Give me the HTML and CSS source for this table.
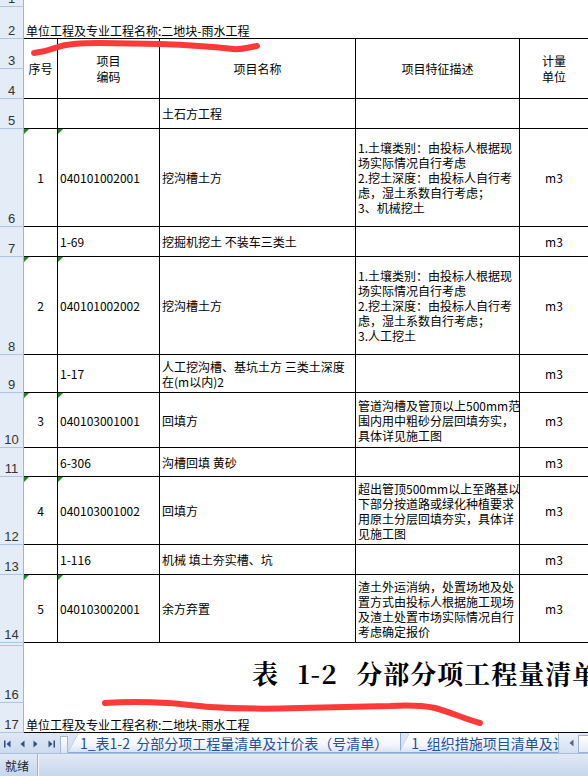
FILE: index.html
```html
<!DOCTYPE html>
<html lang="zh-CN">
<head>
<meta charset="utf-8">
<title>分部分项工程量清单</title>
<link rel="stylesheet" href="styles.css">
</head>
<body>
<div class="app">
  <div class="sheet">
    <div class="rh">1</div><div class="span"></div>
    <div class="rh">2</div><div class="span caption">单位工程及专业工程名称:二地块-雨水工程</div>

    <div class="rh">3</div>
    <div class="c hd">序号</div>
    <div class="c hd">项目<br>编码</div>
    <div class="c hd">项目名称</div>
    <div class="c hd">项目特征描述</div>
    <div class="c hd u">计量<br>单位</div>
    <div class="rh">4</div>

    <div class="rh">5</div>
    <div class="c"></div><div class="c"></div><div class="c">土石方工程</div><div class="c"></div><div class="c u"></div>

    <div class="rh">6</div>
    <div class="c num tri">1</div><div class="c tri">040101002001</div><div class="c">挖沟槽土方</div>
    <div class="c">1.土壤类别：由投标人根据现<br>场实际情况自行考虑<br>2.挖土深度：由投标人自行考<br>虑，湿土系数自行考虑；<br>3、机械挖土</div>
    <div class="c u">m3</div>

    <div class="rh">7</div>
    <div class="c"></div><div class="c">1-69</div><div class="c">挖掘机挖土 不装车三类土</div><div class="c"></div><div class="c u">m3</div>

    <div class="rh">8</div>
    <div class="c num tri">2</div><div class="c tri">040101002002</div><div class="c">挖沟槽土方</div>
    <div class="c">1.土壤类别：由投标人根据现<br>场实际情况自行考虑<br>2.挖土深度：由投标人自行考<br>虑，湿土系数自行考虑；<br>3.人工挖土</div>
    <div class="c u">m3</div>

    <div class="rh">9</div>
    <div class="c"></div><div class="c">1-17</div><div class="c">人工挖沟槽、基坑土方 三类土深度<br>在(m以内)2</div><div class="c"></div><div class="c u">m3</div>

    <div class="rh">10</div>
    <div class="c num tri">3</div><div class="c tri">040103001001</div><div class="c">回填方</div>
    <div class="c">管道沟槽及管顶以上500mm范<br>围内用中粗砂分层回填夯实，<br>具体详见施工图</div>
    <div class="c u">m3</div>

    <div class="rh">11</div>
    <div class="c"></div><div class="c">6-306</div><div class="c">沟槽回填 黄砂</div><div class="c"></div><div class="c u">m3</div>

    <div class="rh">12</div>
    <div class="c num tri">4</div><div class="c tri">040103001002</div><div class="c">回填方</div>
    <div class="c">超出管顶500mm以上至路基以<br>下部分按道路或绿化种植要求<br>用原土分层回填夯实，具体详<br>见施工图</div>
    <div class="c u">m3</div>

    <div class="rh">13</div>
    <div class="c"></div><div class="c">1-116</div><div class="c">机械 填土夯实槽、坑</div><div class="c"></div><div class="c u">m3</div>

    <div class="rh">14</div>
    <div class="c num tri">5</div><div class="c tri">040103002001</div><div class="c">余方弃置</div>
    <div class="c">渣土外运消纳，处置场地及处<br>置方式由投标人根据施工现场<br>及渣土处置市场实际情况自行<br>考虑确定报价</div>
    <div class="c u">m3</div>

    <div class="rh"></div><div class="span"></div>
    <div class="rh">16</div><div class="span title">表 1-2 分部分项工程量清单及计价表</div>
    <div class="rh">17</div><div class="span caption">单位工程及专业工程名称:二地块-雨水工程</div>
  </div>

  <div class="tabbar">
    <div class="nav">
      <svg class="ic i1" width="7" height="8" viewBox="0 0 7 8"><rect x="0" y="0.5" width="1.5" height="7" fill="#2b4f86"/><polygon points="6.5,0.5 2.5,4 6.5,7.5" fill="#2b4f86"/></svg>
      <svg class="ic i2" width="5" height="8" viewBox="0 0 5 8"><polygon points="4.5,0.5 0.5,4 4.5,7.5" fill="#2b4f86"/></svg>
      <svg class="ic i3" width="5" height="8" viewBox="0 0 5 8"><polygon points="0.5,0.5 4.5,4 0.5,7.5" fill="#2b4f86"/></svg>
      <svg class="ic i4" width="7" height="8" viewBox="0 0 7 8"><polygon points="0.5,0.5 4.5,4 0.5,7.5" fill="#2b4f86"/><rect x="5.5" y="0.5" width="1.5" height="7" fill="#2b4f86"/></svg>
    </div>
    <div class="split"></div>
    <div class="tabs">
      <div class="tab active">1_表1-2&nbsp;&nbsp;分部分项工程量清单及计价表（号清单）</div>
      <div class="tab">1_组织措施项目清单及计价表</div>
    </div>
    <div class="scroll">
      <div class="sbtn"><svg width="5" height="8" viewBox="0 0 5 8"><polygon points="4.5,0.5 0.5,4 4.5,7.5" fill="#55657e"/></svg></div>
      <div class="sbox"></div>
    </div>
  </div>

  <div class="status">
    <div class="ready">就绪</div>
    <div class="rest"></div>
  </div>

  <svg class="marks" width="588" height="776" viewBox="0 0 588 776">
    <path d="M34,53 C42,52 50,50 58,47 C66,44 80,43 100,43 L160,44 C190,45 215,47 233,49 C242,50 250,47 257,46" />
    <path d="M105,703 C120,702 150,702 167,703 C185,704 195,706 210,707 C240,709 270,709 300,708 L390,706 C410,705 425,706 435,708 C450,712 465,719 480,723" />
  </svg>
</div>
</body>
</html>
```

FILE: styles.css
```css
* { box-sizing: border-box; }
html, body { margin: 0; padding: 0; }
body {
  width: 588px;
  height: 776px;
  overflow: hidden;
  background: #fff;
  font-family: "Noto Sans CJK SC", "Liberation Sans", sans-serif;
  font-size: 12px;
  color: #000;
}
.app {
  position: relative;
  display: flex;
  flex-direction: column;
  height: 776px;
}
.sheet {
  display: grid;
  grid-template-columns: 24px 34px 102px 196px 164px 1fr;
  grid-template-rows: 7px 32px 30px 30px 30px 98px 30px 98px 38px 55px 29px 68px 30px 68px 3px 57px 30px;
}
.rh {
  display: flex;
  align-items: flex-end;
  justify-content: center;
  background: #e4ecf7;
  border-right: 1px solid #9eb6d5;
  border-bottom: 1px solid #aec4e0;
  font-family: "Liberation Sans", sans-serif;
  font-size: 13px;
  line-height: 13px;
  color: #333;
  overflow: hidden;
  padding-bottom: 1px;
}
.span { grid-column: 2 / -1; }
.caption {
  display: flex;
  align-items: flex-end;
  padding-left: 2px;
  line-height: 15px;
  white-space: nowrap;
  border-bottom: 1px solid #000;
}
.c {
  position: relative;
  display: flex;
  align-items: center;
  padding: 0 2px;
  line-height: 15px;
  white-space: nowrap;
  border-right: 1px solid #000;
  border-bottom: 1px solid #000;
}
.hd {
  grid-row: span 2;
  justify-content: center;
  text-align: center;
  line-height: 16px;
}
.num, .u { justify-content: center; }
.u { border-right: 0; }
.tri::before {
  content: "";
  position: absolute;
  top: 0;
  left: 0;
  border-top: 5px solid #178a17;
  border-right: 5px solid transparent;
}
.title {
  display: flex;
  align-items: center;
  padding-left: 228px;
  padding-bottom: 4px;
  font-family: "Noto Serif CJK SC", "Liberation Serif", "Noto Sans CJK SC", serif;
  font-size: 26px;
  font-weight: 700;
  letter-spacing: 1px;
  word-spacing: 11px;
  white-space: nowrap;
  overflow: hidden;
}

/* sheet tabs */
.tabbar {
  display: flex;
  height: 20px;
  background: linear-gradient(#dfe8f5, #cddbef);
  font-size: 14px;
}
.nav {
  display: flex;
  align-items: center;
  width: 60px;
  flex: none;
  padding-left: 4px;
  padding-top: 2px;
}
.ic { display: block; }
.i2 { margin-left: 9px; }
.i3 { margin-left: 8px; }
.i4 { margin-left: 10px; }
.split {
  width: 8px;
  flex: none;
  margin-top: 3px;
  background: linear-gradient(#ffffff, #dbe5f2);
  border: 1px solid #a3b8d4;
  border-bottom: 0;
}
.tabs {
  flex: 1;
  min-width: 0;
  display: flex;
  overflow: hidden;
}
.tab {
  position: relative;
  flex: none;
  padding: 2px 12px 0 12px;
  line-height: 17px;
  color: #1f4f9e;
  white-space: nowrap;
  background: linear-gradient(#ffffff, #f1f5fb 65%, #d7e3f3);
  border-right: 1px solid #8ea9cf;
  border-bottom: 1px solid #8ea9cf;
  clip-path: polygon(0 100%, 10px 0, 100% 0, 100% 100%);
}
.tab::before {
  content: "";
  position: absolute;
  left: 0;
  top: 0;
  width: 10px;
  height: 100%;
  background: linear-gradient(to top left, transparent calc(50% - 1px), #8ea9cf 50%, transparent calc(50% + 1px));
}
.tab + .tab { margin-left: -2px; }
.scroll {
  display: flex;
  flex: none;
  width: 30px;
}
.sbtn {
  width: 20px;
  display: flex;
  align-items: center;
  justify-content: center;
  padding-left: 6px;
  background: linear-gradient(#eef3fa, #d3dff0);
  border-left: 1px solid #a3b8d4;
}
.sbox {
  flex: 1;
  margin-top: 2px;
  background: linear-gradient(#ffffff, #e2eaf5);
  border: 1px solid #9fb3cf;
  border-right: 0;
}

/* status bar */
.status {
  display: flex;
  height: 23px;
  background: linear-gradient(#e1eaf6, #c6d6ec);
  border-top: 1px solid #a9bfdc;
}
.ready {
  width: 38px;
  flex: none;
  display: flex;
  align-items: center;
  padding-left: 5px;
  font-size: 12px;
  color: #1e2430;
  border-right: 1px solid #9db3d1;
}
.rest {
  flex: 1;
  border-left: 1px solid #f2f6fb;
}

/* freehand annotation strokes */
.marks {
  position: absolute;
  top: 0;
  left: 0;
  pointer-events: none;
}
.marks path {
  fill: none;
  stroke: #fd3a3a;
  stroke-width: 6;
  stroke-linecap: round;
  stroke-linejoin: round;
}
```
